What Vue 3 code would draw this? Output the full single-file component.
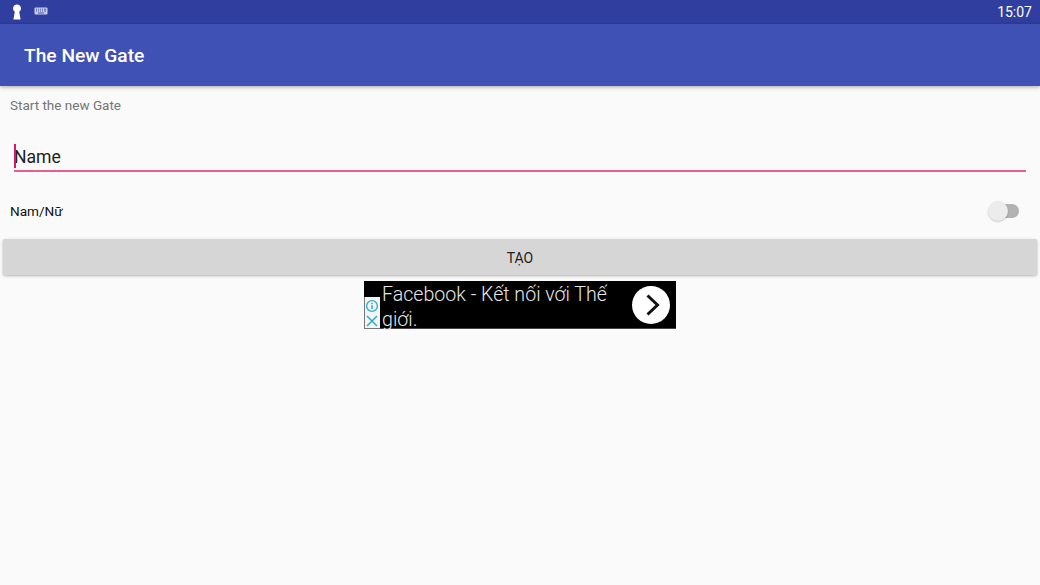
<script setup>
</script>

<template>
  <div class="page">
    <div class="status">
      <div class="status-left">
        <svg class="lock" width="10" height="16" viewBox="0 0 10 16"><path d="M5 0.5a4 4 0 0 1 2.2 7.3L8.6 15.5H1.4L2.8 7.8A4 4 0 0 1 5 0.5z" fill="#fff"/></svg>
        <svg class="kbd" width="14" height="8" viewBox="0 0 14 8">
          <rect x="0.5" y="0.5" width="13" height="7" rx="1" fill="#c5cae9"/>
          <path d="M2 2.2h1M4 2.2h1M6 2.2h1M8 2.2h1M10 2.2h2M2 4h1M4 4h1M6 4h1M8 4h1M10 4h2M4 6h6" stroke="#3949a8" stroke-width="0.9"/>
        </svg>
      </div>
      <span class="clock">15:07</span>
    </div>
    <div class="appbar">The New Gate</div>
    <div class="content">
      <div class="subtitle">Start the new Gate</div>
      <div class="field">
        <span class="caret"></span>
        <span class="placeholder">Name</span>
      </div>
      <div class="switch-row">
        <span class="switch-label">Nam/Nữ</span>
        <span class="switch">
          <span class="track"></span>
          <span class="thumb"></span>
        </span>
      </div>
      <div class="button">TẠO</div>
      <div class="ad-wrap">
        <div class="ad">
          <div class="ad-choices">
            <svg width="16" height="32" viewBox="0 0 16 32">
              <circle cx="8" cy="9" r="5.4" fill="none" stroke="#35adcb" stroke-width="1.4"/>
              <path d="M8 5.8v1.5M8 8.3v3.6" stroke="#35adcb" stroke-width="1.6"/>
              <path d="M3 19l10 10M13 19l-10 10" stroke="#35adcb" stroke-width="1.6"/>
            </svg>
          </div>
          <div class="ad-text">Facebook - Kết nối với Thế giới.</div>
          <div class="ad-go">
            <svg width="38" height="38" viewBox="0 0 38 38">
              <circle cx="19" cy="19" r="19" fill="#fff"/>
              <path d="M15.5 9.5L25.5 19L15.5 28.5" fill="none" stroke="#111" stroke-width="3"/>
            </svg>
          </div>
        </div>
      </div>
    </div>
  </div>
</template>

<style>
html, body { margin: 0; padding: 0; background: #fafafa; }
</style>

<style scoped>
.page {
  width: 1040px;
  height: 585px;
  overflow: hidden;
  background: #fafafa;
  font-family: Roboto, "Liberation Sans", sans-serif;
}
.status {
  height: 24px;
  background: #303f9f;
  display: flex;
  justify-content: space-between;
  align-items: center;
  padding: 0 8px 0 12px;
}
.status-left { display: flex; align-items: center; gap: 12px; margin-top: -1px; }
.kbd { margin-top: -2px; }
.clock { color: #fff; font-size: 14px; }
.appbar {
  height: 62px;
  background: #3f51b5;
  color: #fff;
  font-size: 19.2px;
  font-weight: 500;
  line-height: 63px;
  padding-left: 24px;
  box-shadow: 0 1px 4px rgba(0,0,0,.35);
  position: relative;
}
.content { padding: 0 3px; }
.subtitle {
  color: #757575;
  font-size: 13.5px;
  line-height: 20px;
  padding: 9px 0 0 7px;
}
.field {
  margin: 20px 11px 0 11px;
  height: 27px;
  padding-top: 8px;
  border-bottom: 2px solid #e9608f;
  display: flex;
  align-items: center;
  position: relative;
}
.caret {
  position: absolute;
  left: 0;
  top: 9px;
  width: 2px;
  height: 24px;
  background: #d81b60;
}
.placeholder { color: #222; font-size: 17.6px; }
.switch-row {
  display: flex;
  justify-content: space-between;
  align-items: center;
  height: 36px;
  margin-top: 21px;
  padding: 0 18px 0 7px;
}
.switch-label { color: #111; font-size: 13.6px; }
.switch { position: relative; width: 32px; height: 20px; }
.track {
  position: absolute;
  left: 2px;
  top: 3px;
  width: 30px;
  height: 14px;
  border-radius: 7px;
  background: #b2b2b2;
}
.thumb {
  position: absolute;
  left: 1px;
  top: 0;
  width: 20px;
  height: 20px;
  border-radius: 50%;
  background: #ececec;
  box-shadow: 0 1px 2px rgba(0,0,0,.2);
}
.button {
  height: 36px;
  margin-top: 10px;
  background: #d6d6d6;
  border-radius: 2px;
  box-shadow: 0 1px 3px rgba(0,0,0,.28);
  color: #222;
  font-size: 14px;
  font-weight: 400;
  text-align: center;
  line-height: 38px;
}
.ad-wrap { display: flex; justify-content: center; margin-top: 6px; }
.ad {
  width: 312px;
  height: 48px;
  background: #000;
  display: flex;
  position: relative;
  box-shadow: inset 0 -1px 0 #444;
}
.ad-choices {
  position: absolute;
  left: 0;
  bottom: 0;
  width: 16px;
  height: 32px;
  background: #f2f6f6;
  box-shadow: inset 1px 0 0 #777, inset 0 -1px 0 #777;
  line-height: 0;
}
.ad-text {
  margin-left: 18px;
  margin-top: 1px;
  width: 236px;
  color: #e6e6e6;
  font-family: Roboto, sans-serif;
  font-weight: 300;
  font-size: 19.6px;
  line-height: 25px;
}
.ad-go {
  position: absolute;
  left: 268px;
  top: 5px;
  line-height: 0;
}
</style>
